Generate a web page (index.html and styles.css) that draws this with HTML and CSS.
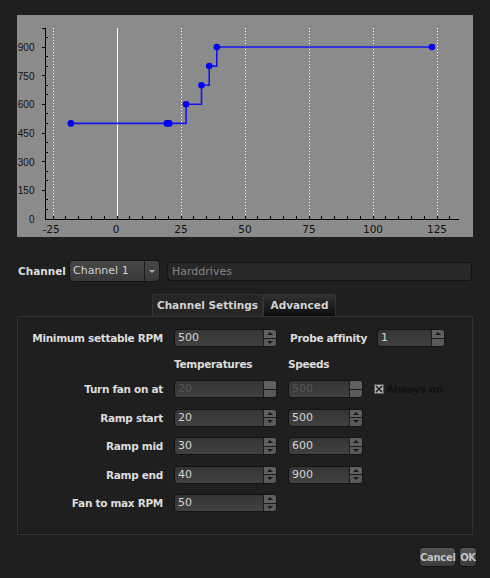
FILE: index.html
```html
<!DOCTYPE html>
<html lang="en">

<head>
    <meta charset="UTF-8">
    <title>Fan Channel</title>
    <link rel="stylesheet" href="styles.css">
</head>

<body>
    <div class="dialog">
        <div class="plot">
            <svg width="456" height="222" viewBox="17 15 456 222">
                <!-- grid -->
                <g stroke="#fff" stroke-width="1" stroke-dasharray="1 2">
                    <line x1="53.5" y1="28" x2="53.5" y2="219" />
                    <line x1="181.5" y1="28" x2="181.5" y2="219" />
                    <line x1="245.5" y1="28" x2="245.5" y2="219" />
                    <line x1="309.5" y1="28" x2="309.5" y2="219" />
                    <line x1="373.5" y1="28" x2="373.5" y2="219" />
                    <line x1="437.5" y1="28" x2="437.5" y2="219" />
                </g>
                <line x1="117.5" y1="28" x2="117.5" y2="219" stroke="#fff" />

                <!-- axes -->
                <g stroke="#000" stroke-width="1" fill="none" shape-rendering="crispEdges">
                    <path d="M42 28.5H45.5V219.5H459" />
                    <path d="M42 190.3h3M42 161.7h3M42 133h3M42 104.3h3M42 75.7h3M42 47h3
                             M46 209.4h2M46 199.9h2M46 180.8h2M46 171.2h2M46 152.1h2M46 142.6h2M46 123.4h2
                             M46 113.9h2M46 94.8h2M46 85.2h2M46 66.1h2M46 56.6h2M46 37.5h2" />
                    <path d="M53.5 216v3M65.5 216v3M78.5 216v3M91.5 216v3M104.5 216v3M117.5 216v3M129.5 216v3
                             M142.5 216v3M155.5 216v3M168.5 216v3M181.5 216v3M193.5 216v3M206.5 216v3M219.5 216v3
                             M232.5 216v3M245.5 216v3M257.5 216v3M270.5 216v3M283.5 216v3M296.5 216v3M309.5 216v3
                             M321.5 216v3M334.5 216v3M347.5 216v3M360.5 216v3M373.5 216v3M385.5 216v3M398.5 216v3
                             M411.5 216v3M424.5 216v3M437.5 216v3M449.5 216v3" />
                </g>

                <!-- curve -->
                <polyline fill="none" stroke="#1616ee" stroke-width="1.6"
                    points="70.9,123.4 186.1,123.4 186.1,104.3 201.5,104.3 201.5,85.2 209.2,85.2 209.2,66.1 216.8,66.1 216.8,47 431.9,47" />
                <g fill="#0000f4">
                    <circle cx="70.9" cy="123.4" r="3.3" />
                    <circle cx="166.9" cy="123.4" r="3.3" />
                    <circle cx="169.3" cy="123.4" r="3.3" />
                    <circle cx="186.1" cy="104.3" r="3.3" />
                    <circle cx="201.5" cy="85.2" r="3.3" />
                    <circle cx="209.2" cy="66.1" r="3.3" />
                    <circle cx="216.8" cy="47" r="3.3" />
                    <circle cx="431.9" cy="47" r="3.3" />
                </g>

                <!-- labels -->
                <g class="axis-label y-label" text-anchor="end">
                    <text x="34.5" y="51">900</text>
                    <text x="34.5" y="79.7">750</text>
                    <text x="34.5" y="108.3">600</text>
                    <text x="34.5" y="137">450</text>
                    <text x="34.5" y="165.7">300</text>
                    <text x="34.5" y="194.3">150</text>
                    <text x="34.5" y="223">0</text>
                </g>
                <g class="axis-label" text-anchor="middle">
                    <text x="51" y="233">-25</text>
                    <text x="116" y="233">0</text>
                    <text x="181" y="233">25</text>
                    <text x="245" y="233">50</text>
                    <text x="309" y="233">75</text>
                    <text x="373" y="233">100</text>
                    <text x="437" y="233">125</text>
                </g>
            </svg>
        </div>

        <div class="channel-row">
            <span class="channel-label">Channel</span>
            <div class="combo">
                <span class="combo-text">Channel 1</span>
                <span class="combo-arrow"></span>
            </div>
            <div class="name-field">Harddrives</div>
        </div>

        <div class="tabs">
            <span class="tab tab-active">Channel Settings</span>
            <span class="tab tab-other">Advanced</span>
        </div>

        <div class="tab-panel">
            <div class="settings">
                <span class="field-label">Minimum settable RPM</span>
                <div class="spin">
                    <span class="spin-value">500</span>
                    <span class="spin-arrows"><i class="spin-up"></i><i class="spin-down"></i></span>
                </div>
                <div class="probe">
                    <span class="field-label">Probe affinity</span>
                    <div class="spin spin-small">
                        <span class="spin-value">1</span>
                        <span class="spin-arrows"><i class="spin-up"></i><i class="spin-down off"></i></span>
                    </div>
                </div>

                <span></span>
                <span class="col-head">Temperatures</span>
                <span class="col-head">Speeds</span>
                <span></span>

                <span class="field-label">Turn fan on at</span>
                <div class="spin disabled">
                    <span class="spin-value">20</span>
                    <span class="spin-arrows"><i class="spin-up off"></i><i class="spin-down off"></i></span>
                </div>
                <div class="spin disabled">
                    <span class="spin-value">500</span>
                    <span class="spin-arrows"><i class="spin-up off"></i><i class="spin-down off"></i></span>
                </div>
                <div class="always-on">
                    <span class="check">
                        <svg width="8" height="8" viewBox="0 0 8 8">
                            <path d="M1 1L7 7M7 1L1 7" stroke="#222" stroke-width="1.6" />
                        </svg>
                    </span>
                    <span class="check-label">Always on</span>
                </div>

                <span class="field-label">Ramp start</span>
                <div class="spin">
                    <span class="spin-value">20</span>
                    <span class="spin-arrows"><i class="spin-up"></i><i class="spin-down"></i></span>
                </div>
                <div class="spin">
                    <span class="spin-value">500</span>
                    <span class="spin-arrows"><i class="spin-up"></i><i class="spin-down"></i></span>
                </div>
                <span></span>

                <span class="field-label">Ramp mid</span>
                <div class="spin">
                    <span class="spin-value">30</span>
                    <span class="spin-arrows"><i class="spin-up"></i><i class="spin-down"></i></span>
                </div>
                <div class="spin">
                    <span class="spin-value">600</span>
                    <span class="spin-arrows"><i class="spin-up"></i><i class="spin-down"></i></span>
                </div>
                <span></span>

                <span class="field-label">Ramp end</span>
                <div class="spin">
                    <span class="spin-value">40</span>
                    <span class="spin-arrows"><i class="spin-up"></i><i class="spin-down"></i></span>
                </div>
                <div class="spin">
                    <span class="spin-value">900</span>
                    <span class="spin-arrows"><i class="spin-up"></i><i class="spin-down"></i></span>
                </div>
                <span></span>

                <span class="field-label">Fan to max RPM</span>
                <div class="spin">
                    <span class="spin-value">50</span>
                    <span class="spin-arrows"><i class="spin-up"></i><i class="spin-down"></i></span>
                </div>
            </div>
        </div>

        <div class="buttons">
            <button class="btn btn-cancel">Cancel</button>
            <button class="btn btn-ok">OK</button>
        </div>
    </div>
</body>

</html>
```

FILE: styles.css
```css
* {
    margin: 0;
    padding: 0;
    box-sizing: border-box;
}

body {
    font-family: "DejaVu Sans", sans-serif;
    background: #1f1f1f;
    width: 490px;
    height: 578px;
    overflow: hidden;
}

.dialog {
    display: flex;
    flex-direction: column;
    padding: 15px 17px 0;
}

/* plot */

.plot {
    height: 222px;
    background: #8b8b8b;
}

.plot svg {
    display: block;
}

.axis-label {
    font-family: "DejaVu Sans", sans-serif;
    font-size: 10.5px;
    fill: #111;
}

.y-label {
    font-family: "Liberation Sans", sans-serif;
    font-size: 10px;
}

/* channel row */

.channel-row {
    display: flex;
    align-items: center;
    height: 22px;
    margin-top: 23px;
}

.channel-label {
    width: 52px;
    padding-left: 1px;
    font-size: 10.5px;
    font-weight: bold;
    color: #dcdcdc;
}

.combo {
    display: flex;
    width: 91px;
    height: 22px;
    border: 1px solid #141414;
    border-radius: 4px;
    background: linear-gradient(#474747, #393939);
}

.combo-text {
    flex: 1;
    padding-left: 3px;
    font-size: 11px;
    line-height: 20px;
    color: #cfcfcf;
}

.combo-arrow {
    width: 15px;
    border-left: 1px solid #1a1a1a;
    display: flex;
    align-items: center;
    justify-content: center;
}

.combo-arrow::after {
    content: "";
    border-left: 3px solid transparent;
    border-right: 3px solid transparent;
    border-top: 3.5px solid #b0b0b0;
}

.name-field {
    flex: 1;
    height: 19px;
    margin-left: 7px;
    margin-right: 1px;
    padding-left: 4px;
    border: 1px solid #121212;
    border-radius: 4px;
    background: #282828;
    font-size: 11px;
    line-height: 17px;
    color: #858585;
}

/* tabs */

.tabs {
    display: flex;
    justify-content: center;
    height: 22px;
    margin-top: 12px;
    padding-right: 2px;
}

.tab {
    font-size: 10.5px;
    font-weight: bold;
    line-height: 21px;
    color: #d2d2d2;
    text-align: center;
    border: 1px solid #343434;
    border-bottom: none;
    border-radius: 3px 3px 0 0;
}

.tab-active {
    width: 111px;
    background: #262626;
}

.tab-other {
    width: 73px;
    background: linear-gradient(#323232, #0c0c0c);
}

.tab-panel {
    height: 219px;
    padding-top: 12px;
    border: 1px solid #333;
    box-shadow: inset 0 -1px 0 #181818;
}

/* settings grid */

.settings {
    display: grid;
    grid-template-columns: 145px 103px 75px auto;
    grid-template-rows: 18px 12px repeat(5, 18px);
    column-gap: 11px;
    row-gap: 10.5px;
    align-items: center;
}

.field-label {
    text-align: right;
    font-size: 10.5px;
    font-weight: bold;
    letter-spacing: -0.3px;
    color: #dcdcdc;
    white-space: nowrap;
}

.col-head {
    font-size: 10.5px;
    font-weight: bold;
    letter-spacing: -0.3px;
    color: #dcdcdc;
}

.probe {
    grid-column: 3 / 5;
    display: flex;
    align-items: center;
    gap: 10px;
    padding-left: 2px;
}

.spin {
    display: flex;
    height: 18px;
    border: 1px solid #141414;
    border-radius: 4px;
    background: linear-gradient(#353535, #414141);
}

.spin-small {
    width: 68px;
}

.spin-value {
    flex: 1;
    padding-left: 3px;
    font-size: 11px;
    line-height: 16px;
    color: #d4d4d4;
}

.spin.disabled .spin-value {
    color: #555;
}

.spin-arrows {
    width: 13px;
    display: flex;
    flex-direction: column;
    border-left: 1px solid #1c1c1c;
    border-radius: 0 3px 3px 0;
    background: #5a5a5a;
    overflow: hidden;
}

.spin-up,
.spin-down {
    flex: 1;
    display: flex;
    align-items: center;
    justify-content: center;
}

.spin-up {
    border-bottom: 1px solid #1c1c1c;
    background: #606060;
}

.spin-up::after {
    content: "";
    border-left: 3.5px solid transparent;
    border-right: 3.5px solid transparent;
    border-bottom: 3.5px solid #1a1a1a;
}

.spin-down::after {
    content: "";
    border-left: 3.5px solid transparent;
    border-right: 3.5px solid transparent;
    border-top: 3.5px solid #1a1a1a;
}

.spin-up.off::after,
.spin-down.off::after {
    display: none;
}

.always-on {
    display: flex;
    align-items: center;
    gap: 2px;
}

.check {
    flex-shrink: 0;
    width: 10px;
    height: 10px;
    display: flex;
    align-items: center;
    justify-content: center;
    background: #b2b2b2;
    border: 1px solid #555;
}

.check svg {
    display: block;
}

.check-label {
    font-size: 10.5px;
    font-weight: bold;
    letter-spacing: -0.3px;
    color: #111;
    white-space: nowrap;
}

/* buttons */

.buttons {
    display: flex;
    justify-content: flex-end;
    gap: 3px;
    margin-top: 12px;
    margin-right: -4px;
}

.btn {
    height: 20px;
    padding: 0;
    font-family: "DejaVu Sans", sans-serif;
    font-size: 10px;
    font-weight: bold;
    letter-spacing: -0.3px;
    color: #c4c4c4;
    background: linear-gradient(#545454, #3d3d3d);
    border: 1px solid #161616;
    border-radius: 4px;
}

.btn-cancel {
    width: 37px;
}

.btn-ok {
    width: 18px;
}
```
